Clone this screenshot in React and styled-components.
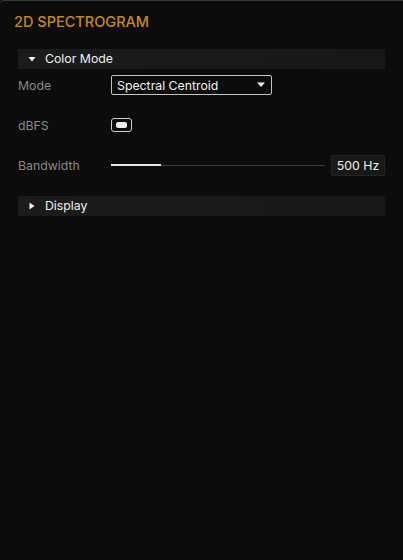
import React from "react";
import styled, { createGlobalStyle } from "styled-components";

const GlobalStyle = createGlobalStyle`
    html, body {
        margin: 0;
        padding: 0;
        background: #0b0b0b;
        font-family: Inter, "Noto Sans", sans-serif;
    }
`

const Panel = styled.div`
    box-sizing: border-box;
    width: 403px;
    height: 560px;
    background: #0c0c0c;
    border-top: 1px solid #3a3a3a;
    border-top-left-radius: 4px;
    padding: 13px 18px 0 18px;
    display: flex;
    flex-direction: column;
`

const Title = styled.h1`
    margin: 0 0 0 -4px;
    font-size: 14.5px;
    font-weight: 500;
    line-height: 16px;
    color: #c58a12;
`

const Section = styled.section`
    display: flex;
    flex-direction: column;
    gap: 6px;
    margin-top: ${({top}) => top}px;
`

const SectionHeader = styled.div`
    height: 20px;
    display: flex;
    align-items: center;
    gap: 9px;
    padding-left: 10px;
    background: linear-gradient(90deg, #1b1b1b, #181818);
    color: #f0f0f0;
    font-size: 12.3px;
    line-height: 20px;
    margin-bottom: -7px;
`

const Arrow = styled.svg`
    width: 8px;
    height: 8px;
    fill: #f2f2f2;
`

const Row = styled.div`
    height: 34px;
    display: flex;
    align-items: center;
`

const Label = styled.span`
    width: 93px;
    flex-shrink: 0;
    font-size: 12.3px;
    color: #8a8a8a;
`

const Select = styled.div`
    box-sizing: border-box;
    width: 161px;
    height: 20px;
    border: 1px solid #c4c4c4;
    border-radius: 2px;
    display: flex;
    align-items: center;
    justify-content: space-between;
    padding: 0 6px 0 5px;
    color: #f4f4f4;
    font-size: 12.3px;
`

const Checkbox = styled.div`
    box-sizing: border-box;
    width: 21px;
    height: 14px;
    border: 1px solid #d0d0d0;
    border-radius: 3px;
    display: flex;
    align-items: center;
    justify-content: center;

    &::after {
        content: "";
        width: 11px;
        height: 6px;
        border-radius: 2px;
        background: #eeeeee;
    }
`

const SliderTrack = styled.div`
    flex: 1;
    height: 1px;
    background: #3c3c3c;
    display: flex;
    align-items: center;
    margin-right: 6px;
`

const SliderFill = styled.div`
    height: 2px;
    background: #e6e6e6;
`

const ValueBox = styled.div`
    box-sizing: border-box;
    width: 54px;
    height: 21px;
    border: 1px solid #242424;
    border-radius: 2px;
    background: #191919;
    color: #f0f0f0;
    font-size: 12.3px;
    display: flex;
    align-items: center;
    justify-content: center;
`

const Caret = () => (
    <svg width="8" height="6" viewBox="0 0 8 6">
        <path d="M0 0.5h8L4 5z" fill="#f0f0f0"/>
    </svg>
)

const Toggle = ({open}) => (
    <Arrow viewBox="0 0 8 8">
        {open ? <path d="M0.5 2h7L4 6.5z"/> : <path d="M1.5 0.5v7L6.5 4z"/>}
    </Arrow>
)

const App = () => {
    const bandwidth = 0.235;

    return (
        <>
            <GlobalStyle/>
            <Panel>
                <Title>2D SPECTROGRAM</Title>
                <Section top={19}>
                    <SectionHeader>
                        <Toggle open/>
                        Color Mode
                    </SectionHeader>
                    <Row>
                        <Label>Mode</Label>
                        <Select>
                            Spectral Centroid
                            <Caret/>
                        </Select>
                    </Row>
                    <Row>
                        <Label>dBFS</Label>
                        <Checkbox/>
                    </Row>
                    <Row>
                        <Label>Bandwidth</Label>
                        <SliderTrack>
                            <SliderFill style={{width: `${bandwidth * 100}%`}}/>
                        </SliderTrack>
                        <ValueBox>500 Hz</ValueBox>
                    </Row>
                </Section>
                <Section top={14}>
                    <SectionHeader>
                        <Toggle/>
                        Display
                    </SectionHeader>
                </Section>
            </Panel>
        </>
    )
}

export default App;
